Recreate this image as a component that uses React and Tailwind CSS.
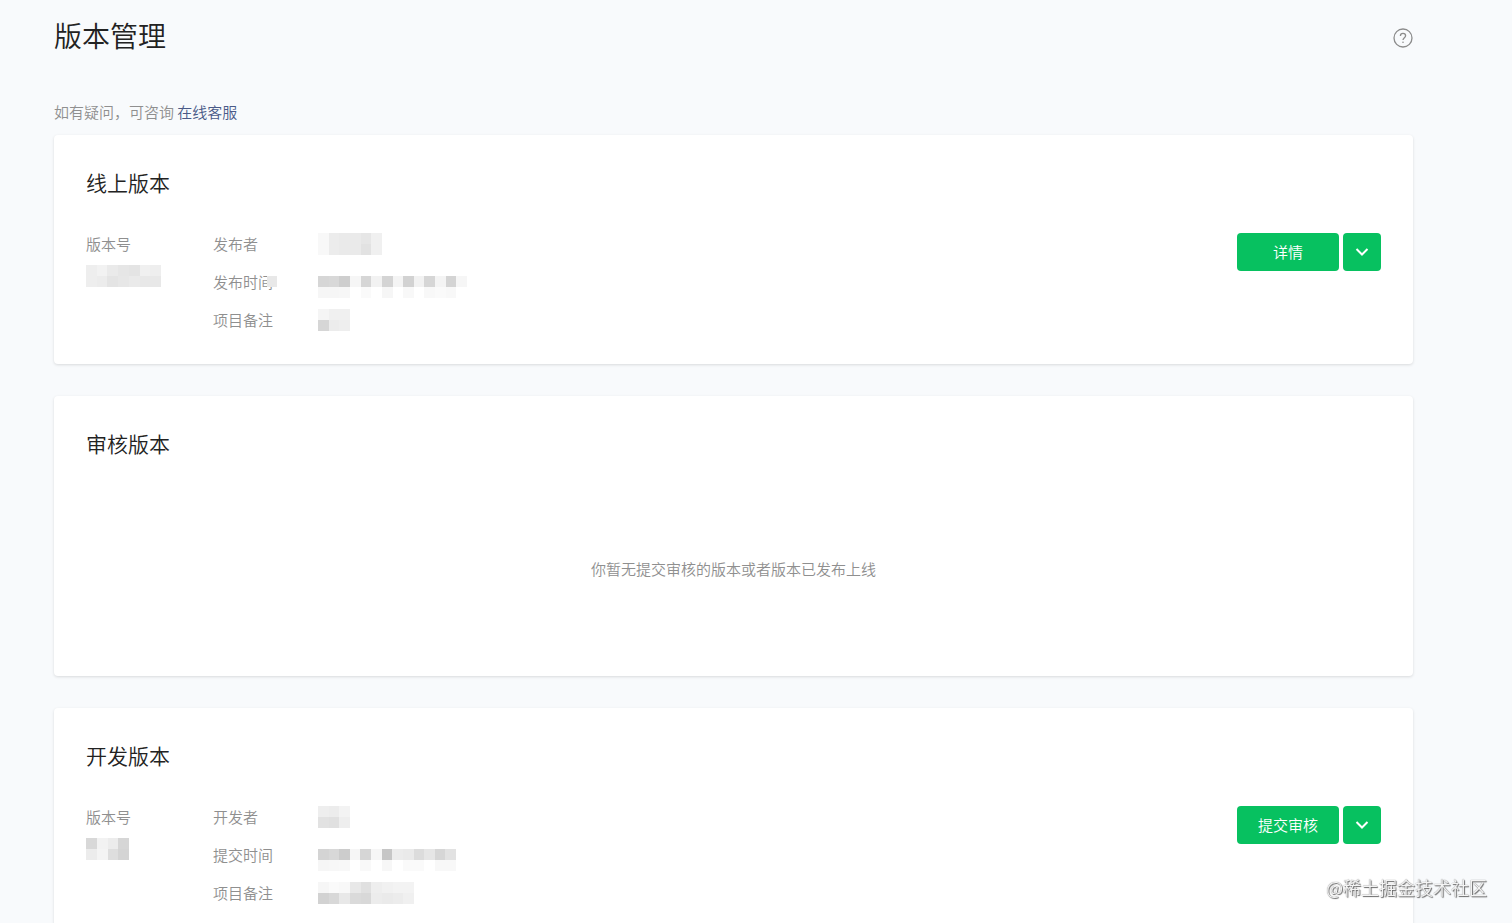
import React from 'react';

// rows of grey values, one per masked block (0 = empty)
const MASKS = {
  onlineNo: [[238, 242, 234, 230, 228, 240, 238], [238, 236, 228, 231, 234, 232, 232]],
  publisher: [[248, 236, 234, 234, 230, 240], [248, 236, 234, 234, 226, 240]],
  publishTime: [[214, 216, 206, 246, 214, 242, 212, 244, 210, 242, 214, 244, 212, 246], [246, 246, 247, 0, 250, 0, 246, 0, 248, 0, 248, 250, 248, 0]],
  onlineNote: [[245, 240, 240], [214, 236, 238]],
  devNo: [[216, 242, 236, 214], [236, 244, 222, 212]],
  developer: [[238, 236, 243], [226, 224, 238]],
  submitTime: [[212, 216, 204, 246, 214, 246, 198, 236, 234, 220, 230, 214, 226], [246, 247, 248, 0, 249, 0, 247, 0, 250, 250, 0, 248, 248]],
  devNote: [[246, 250, 248, 232, 224, 238, 241, 243, 243], [210, 216, 232, 218, 216, 236, 234, 236, 240]],
};

const ONLINE = [
  { label: '发布者', mask: 'publisher', width: 64 },
  { label: '发布时间', mask: 'publishTime', width: 149, low: true, covered: true },
  { label: '项目备注', mask: 'onlineNote', width: 32 },
];

const DEV = [
  { label: '开发者', mask: 'developer', width: 32 },
  { label: '提交时间', mask: 'submitTime', width: 138, low: true },
  { label: '项目备注', mask: 'devNote', width: 96 },
];

export default function App() {
  return (
    <div className="h-screen overflow-hidden bg-[#f8fafc] pl-[54px] pr-[99px] font-['Noto_Sans_CJK_SC',sans-serif] text-[15px] leading-[22px] font-[350] text-[#8f8f8f]">
      <header className="flex items-end justify-between pt-[14px]">
        <h1 className="text-[28px] leading-[42px] text-[#222]">版本管理</h1>
        <button aria-label="帮助" className="mb-2 text-[#8c8c8c]">
          <HelpIcon />
        </button>
      </header>

      <p className="mt-[45px] mb-3">
        如有疑问，可咨询 <a href="#service" className="text-[#4a5a88]">在线客服</a>
      </p>

      <main className="flex flex-col gap-8">
        <Card title="线上版本">
          <Version mask="onlineNo" width={75} fields={ONLINE} action="详情" />
        </Card>

        <Card title="审核版本">
          <p className="flex h-[182px] items-center justify-center pb-8">你暂无提交审核的版本或者版本已发布上线</p>
        </Card>

        <Card title="开发版本">
          <Version mask="devNo" width={43} fields={DEV} action="提交审核" />
        </Card>
      </main>

      <div className="pointer-events-none fixed right-[25px] bottom-[22px] text-[18px] leading-7 text-[#f4f4f4] [text-shadow:1px_1px_1px_#666,0_0_1px_#666]">@稀土掘金技术社区</div>
    </div>
  );
}

function Card({ title, children }) {
  return (
    <section className="rounded-[4px] bg-white px-8 pt-8 shadow-[0_1px_3px_rgba(0,0,0,0.13)]">
      <h2 className="mb-9 text-[21px] leading-[30px] text-[#222]">{title}</h2>
      {children}
    </section>
  );
}

function Version({ mask, width, fields, action }) {
  return (
    <div className="flex items-start pb-[33px]">
      <dl className="w-[127px]">
        <dt>版本号</dt>
        <dd className="mt-[10px]"><Mosaic name={mask} width={width} /></dd>
      </dl>
      <dl className="flex flex-1 flex-col gap-4">
        {fields.map(f => (
          <div key={f.label} className="flex h-[22px]">
            <dt className="relative w-[105px]">
              {f.label}
              {f.covered && <span className="absolute top-[5px] left-[54px] h-[11px] w-[10px] bg-[#e8e8e8]" />}
            </dt>
            <dd className={f.low ? 'pt-[5px]' : ''}><Mosaic name={f.mask} width={f.width} /></dd>
          </div>
        ))}
      </dl>
      <div className="flex gap-1">
        <button className="h-[38px] w-[102px] rounded-[4px] bg-[#07c160] text-white">{action}</button>
        <button aria-label="更多操作" className="flex size-[38px] items-center justify-center rounded-[4px] bg-[#07c160] text-white">
          <svg width="14" height="10" viewBox="0 0 14 10" fill="none" stroke="currentColor" strokeWidth="2">
            <path d="M1.5 2 7 7.5 12.5 2" />
          </svg>
        </button>
      </div>
    </div>
  );
}

function Mosaic({ name, width }) {
  const rows = MASKS[name];
  return (
    <svg width={width} height="22" viewBox={`0 0 ${rows[0].length} 2`} preserveAspectRatio="none" shapeRendering="crispEdges" aria-hidden="true">
      {rows.map((row, y) => row.map((g, x) => g > 0 && (
        <rect key={`${x}-${y}`} x={x} y={y} width="1" height="1" fill={`rgb(${g},${g},${g})`} />
      )))}
    </svg>
  );
}

function HelpIcon() {
  return (
    <svg width="20" height="20" viewBox="0 0 20 20" fill="none" stroke="currentColor" strokeWidth="1.3">
      <circle cx="10" cy="10" r="9" />
      <path d="M7.4 8c0-1.6 1.1-2.6 2.6-2.6s2.6 1 2.6 2.4c0 1.9-2.6 2.1-2.6 4.3" />
      <circle cx="10" cy="14.3" r=".8" fill="currentColor" stroke="none" />
    </svg>
  );
}
